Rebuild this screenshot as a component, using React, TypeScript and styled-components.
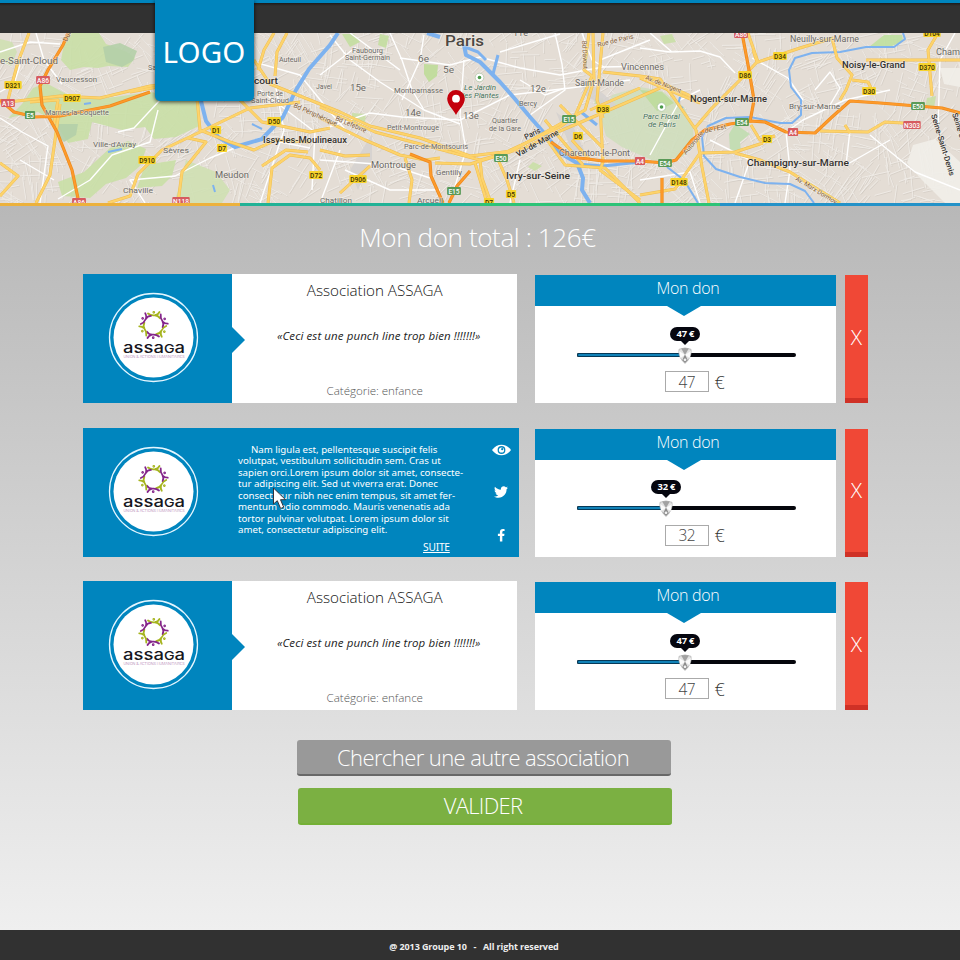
import React from "react";
import styled, { createGlobalStyle } from "styled-components";
import { FaTwitter, FaFacebookF } from "react-icons/fa";

const BLUE = "#0085be";
const LIGHT_FONT = '"Open Sans", "Noto Sans", sans-serif';

const GlobalStyle = createGlobalStyle`
  * { box-sizing: border-box; }
  body { margin: 0; }
  button, input { font: inherit; margin: 0; padding: 0; }
`;

const Page = styled.div`
  width: 960px;
  height: 960px;
  display: flex;
  flex-direction: column;
  overflow: hidden;
  font-family: ${LIGHT_FONT};
  font-weight: 300;
  background: #efefef;
`;

const TopBar = styled.header`
  position: relative;
  flex: none;
  height: 33px;
  background: linear-gradient(#1c1c1c, #313131 3px);
  background-origin: padding-box;
  border-top: 3px solid ${BLUE};
`;

const Logo = styled.div`
  position: absolute;
  z-index: 2;
  top: -3px;
  left: 154.5px;
  width: 99px;
  height: 101px;
  padding: 2px 0 0 0;
  display: flex;
  align-items: center;
  justify-content: center;
  border-radius: 0 0 5px 5px;
  background: ${BLUE};
  box-shadow: 0 1px 4px rgba(0, 0, 0, 0.75);
  color: #fff;
  font: 400 29.5px "Noto Sans", sans-serif;
  letter-spacing: 0.1px;
`;

const MapSvg = styled.svg`
  display: block;
  flex: none;
`;

const Stripe = styled.div`
  flex: none;
  display: grid;
  grid-template-columns: repeat(4, 1fr);
  height: 3px;
`;

const StripePart = styled.span<{ $color: string }>`
  background: ${(p) => p.$color};
`;

const Main = styled.main`
  flex: none;
  height: 724px;
  display: flex;
  flex-direction: column;
  background: linear-gradient(#b8b8b8, #efefef);
`;

const Title = styled.h1`
  margin: 13px 0 0;
  padding-right: 5px;
  height: 55px;
  line-height: 36px;
  text-align: center;
  color: #fff;
  font-size: 26px;
  font-weight: 300;
  letter-spacing: -0.38px;
`;

const List = styled.div`
  display: flex;
  flex-direction: column;
  gap: 24.5px;
  padding-left: 83px;
`;

const Row = styled.section`
  display: flex;
  height: 129px;
`;

const Card = styled.article<{ $open?: boolean }>`
  position: relative;
  display: flex;
  flex: none;
  width: ${(p) => (p.$open ? 435.5 : 433.5)}px;
  margin-right: ${(p) => (p.$open ? 16.5 : 18.5)}px;
  background: ${(p) => (p.$open ? BLUE : "#fff")};
`;

const Badge = styled.div<{ $arrow?: boolean }>`
  position: relative;
  flex: none;
  width: 149px;
  background: ${BLUE};
  padding: 18px 0 0 25px;
  &::after {
    content: "";
    display: ${(p) => (p.$arrow ? "block" : "none")};
    position: absolute;
    left: 100%;
    top: 53px;
    border: 13px solid transparent;
    border-left-color: ${BLUE};
    border-right: 0;
  }
`;

const Summary = styled.div`
  flex: 1;
  display: flex;
  flex-direction: column;
  align-items: center;
  padding: 6px 0 0 1px;
  white-space: nowrap;
`;

const Name = styled.h2`
  margin: 0;
  font-size: 15.2px;
  line-height: 20px;
  font-weight: 300;
  letter-spacing: -0.02px;
  color: #111;
`;

const Quote = styled.p`
  margin: 28px 0 0;
  padding-left: 8px;
  font: italic 400 11.5px/16px "Open Sans", sans-serif;
  letter-spacing: 0.09px;
  color: #222;
`;

const Category = styled.p`
  margin: 38px 0 0;
  font-size: 11.6px;
  line-height: 18px;
  letter-spacing: -0.05px;
  color: #555;
`;

const Details = styled.div`
  width: 238px;
  padding: 16px 0 0 6px;
  color: #fff;
  font: 400 9.7px/11.57px "Noto Sans", sans-serif;
  letter-spacing: -0.02px;
  white-space: nowrap;
`;

const Line = styled.span<{ $indent?: boolean }>`
  display: block;
  padding-left: ${(p) => (p.$indent ? 13 : 0)}px;
`;

const More = styled.a`
  display: block;
  width: 28px;
  margin: 6px 0 0 185px;
  font-size: 10.200px;
  letter-spacing: -0.2px;
  text-decoration: underline;
`;

const Socials = styled.div`
  flex: 1;
  display: flex;
  flex-direction: column;
  align-items: center;
  justify-content: space-between;
  padding: 16px 0 15px 14px;
  color: #fff;
`;

const Pointer = styled.svg`
  position: absolute;
  left: 189px;
  top: 59px;
`;

const Panel = styled.div`
  flex: none;
  width: 301px;
  height: 128px;
  margin: 1px 9px 0 0;
  background: #fff;
`;

const PanelHead = styled.div`
  position: relative;
  height: 31px;
  line-height: 27px;
  padding-left: 5px;
  text-align: center;
  background: ${BLUE};
  color: #fff;
  font-size: 16px;
  letter-spacing: -0.3px;
  &::after {
    content: "";
    position: absolute;
    top: 31px;
    left: 132px;
    border: 17px solid transparent;
    border-top: 10px solid ${BLUE};
    border-bottom: 0;
  }
`;

const Track = styled.div`
  position: relative;
  width: 219px;
  height: 4px;
  margin: 46.5px 0 0 42px;
  border-radius: 2px;
  background: #05060c;
`;

const Fill = styled.div`
  height: 4px;
  border: 1px solid #063a58;
  border-right: 0;
  border-radius: 2px 0 0 2px;
  background: #1182b8;
`;

const Thumb = styled.div`
  position: absolute;
  top: -26px;
  width: 30px;
  margin-left: -15px;
  display: flex;
  flex-direction: column;
  align-items: center;
`;

const Bubble = styled.div`
  position: relative;
  width: 30px;
  height: 14px;
  margin-bottom: 6px;
  border-radius: 7px;
  background: #05060f;
  color: #fff;
  text-align: center;
  font: 700 9.4px/14px "Open Sans", sans-serif;
  letter-spacing: -0.2px;
  &::after {
    content: "";
    position: absolute;
    left: 11px;
    top: 14px;
    border: 4px solid transparent;
    border-top-color: #05060f;
    border-bottom: 0;
  }
`;

const Amount = styled.div`
  display: flex;
  align-items: center;
  gap: 6px;
  margin: 14.5px 0 0 130px;
  color: #333;
  font-size: 18px;
  line-height: 20px;
`;

const AmountInput = styled.input`
  width: 43.5px;
  height: 21px;
  border: 1px solid #aaa;
  border-radius: 0;
  background: #fff;
  text-align: center;
  color: #444;
  font-size: 15.5px;
  font-weight: 300;
  letter-spacing: -0.6px;
  outline: 0;
`;

const Remove = styled.button`
  flex: none;
  width: 23px;
  height: 128px;
  margin-top: 1px;
  border: 0;
  border-bottom: 5px solid #cf3126;
  background: #f04836;
  color: #fff;
  font-size: 21px;
`;

const Actions = styled.div`
  display: flex;
  flex-direction: column;
  gap: 12px;
  padding: 29.5px 0 0 297px;
`;

const Action = styled.button<{ $primary?: boolean }>`
  width: 374px;
  height: 36.5px;
  margin-left: ${(p) => (p.$primary ? 0.5 : 0)}px;
  padding-right: ${(p) => (p.$primary ? 3 : 2)}px;
  border: 0;
  border-bottom: 2px solid ${(p) => (p.$primary ? "#74b035" : "#686868")};
  border-radius: 3px;
  background: ${(p) => (p.$primary ? "#7bb042" : "#999")};
  color: #fff;
  font-size: 22px;
  line-height: 34px;
  letter-spacing: ${(p) => (p.$primary ? -0.7 : -0.58)}px;
`;

const Footer = styled.footer`
  flex: none;
  height: 30px;
  padding: 1px 12px 0 0;
  line-height: 31px;
  text-align: center;
  white-space: pre;
  background: #313131;
  color: #eee;
  font-size: 9px;
  font-weight: 700;
  letter-spacing: -0.1px;
`;

/* ---------- map data ---------- */

const parks: [string, string][] = [
  ["M66 33H99L106 44 127 52 135 58 128 67 108 66 98 68 84 67 70 70 61 60Z", "#c9dfa6"],
  ["M103 47 120 43 137 51 133 61 122 67 106 62Z", "#b4cfa9"],
  ["M0 39 12 42 17 52 11 66 0 60Z", "#cfe0b2"],
  ["M33 88 46 83 70 96 100 99 150 92 200 99 199 126 176 137 154 139 145 127 122 130 92 122 88 139 68 143 55 122 38 112 8 118 22 104Z", "#c9dfa6"],
  ["M54 124 78 124 76 135 64 142 56 134Z", "#b4cfa9"],
  ["M110 148 128 141 146 149 140 166 126 178 106 184 90 198 62 196 58 182 84 172Z", "#c9dfa6"],
  ["M145 165 176 160 172 176 162 186 137 188Z", "#c9dfa6"],
  ["M186 160 216 172 230 190 222 203H174L180 184Z", "#cfe0b2"],
  ["M342 34 354 34 360 42 350 47Z M380 34 389 36 386 48 378 45Z", "#c3dea0"],
  ["M424 64 438 65 437 76 429 82 424 74Z", "#bedc98"],
  ["M352 113 366 114 365 122 352 121Z M533 162 542 166 535 171 528 167Z M594 99 603 98 604 104 595 104Z", "#c9dfa6"],
  ["M612 95 640 87 662 91 684 107 693 126 694 146 682 157 654 161 622 147 606 136 601 118Z", "#cfdebc"],
  ["M640 90 662 92 674 103 657 111Z", "#bedb9b"],
  ["M735 124 750 134 740 142 741 152 730 150 729 134Z", "#c0ddb0"],
  ["M884 35H902L903 41 890 47 869 47Z", "#bfe0a0"],
  ["M660 36 672 34 676 42 664 44Z M927 98 936 96 934 108 925 108Z", "#c9dfa6"],
  ["M940 68H960V87L944 84Z M907 163 913 145 935 139 960 162V203H945L921 179Z", "#f1eee9"],
  ["M580 78 594 86 620 108 610 110 585 95Z M556 112 572 124 584 150 572 152Z M372 134 350 170 358 190 372 160Z", "#d5d1cf"],
];

const whiteRoads = [
  "M36 33 44 60 62 84 M0 52 30 42 60 44 M58 199 90 180 112 155 150 142 158 110M145 203 130 180 175 176 210 158 260 138 310 148",
  "M160 100 134 128 118 132M0 92 14 84 20 65 M0 118 22 132 48 146 40 203M20 160 54 180",
  "M254 62 300 75 330 112 350 135M260 90 315 132 312 190M276 88 284 130 260 203",
  "M320 130 370 113 402 117 460 120 510 95 570 88 630 80M390 33 402 60 412 90 424 110M450 203 466 150 460 115 464 60",
  "M330 35 350 60 380 82 424 110 460 124 M320 75 356 47 M400 58 450 65 480 57 520 68 560 75 603 67 650 66M520 80 545 95 565 88",
  "M350 33 400 70 M424 35 420 60 402 100 M555 33 562 64 565 90 530 115M320 160 390 165 430 178M520 160 510 203",
  "M640 48 670 52 700 51 720 57 735 73M672 52 650 33M752 58 788 78 803 100M700 90 680 100 650 155",
  "M785 203 790 170 786 132 803 120 845 100 890 90M815 90 830 72 840 88 830 105M850 130 846 165 890 140",
  "M870 135 915 172 960 190M710 140 750 160 735 203M955 33 940 60 938 130M640 180 690 172 700 203",
  "M500 52 560 34M582 33 592 60 604 67M600 60 650 40M340 150 320 203M345 170 390 190 440 190",
];

const yellowRoads = [
  "M29 33 18 62 12 84 8 100M0 103 60 96 100 98 150 86 200 80M60 104 55 140 50 175 36 203M0 163 18 176 0 196",
  "M30 102 58 100 54 124M200 84 180 83 130 92M254 60 270 84 340 112 370 126 420 138 470 156 520 150 560 131 600 114 660 88",
  "M108 203 130 196 138 174 162 150 200 132 250 108 300 102M188 138 206 142 182 172 178 203M197 98 200 130 230 142 254 150 276 140 310 142",
  "M232 92 262 122 310 132 330 128M268 203 272 168 290 155 310 158 320 170M274 33 264 50 258 70M287 33 277 52 275 76",
  "M262 166 286 150 308 152M320 107 375 132 450 152 480 160 510 152 585 110 594 80 593 33",
  "M320 118 365 140 400 155 425 160 440 158M320 150 345 156 370 155M435 163 470 164 500 155 560 127 575 116 592 76 584 70 589 33",
  "M480 160 482 178 491 203M496 155 507 180 514 203M475 163 487 203M405 158 412 180 409 203M340 193 370 166",
  "M603 72 640 76 660 79 674 98 696 130 702 167 709 203M600 105 603 162 600 170 640 200M545 120 560 138 583 165M560 105 603 148M603 33 600 66 597 100 603 118",
  "M545 137 565 165 605 168 640 203M590 110 640 88M572 140 590 160M640 77 656 80 695 98",
  "M748 33 758 62 800 48 833 38M695 128 712 108 740 80 757 62 753 50M640 195 675 189 700 153 735 152 763 143",
  "M751 125 760 140 775 136M735 153 760 160 790 172 840 203M832 38 837 58 852 75 846 90 840 100M820 131 868 132 885 122 920 124",
  "M938 33 928 50 932 96M866 60 960 60M852 80 868 82 872 90M845 125 850 133M640 78 700 103",
];

const orangeRoads = [
  "M68 33 63 45 48 70 40 86 42 105 57 132 72 170 79 203M0 100 14 112 35 117 60 116 110 106 150 92",
  "M410 154 430 162 431 176 443 203M470 171 457 186 449 203M551 142 572 157 603 161 640 161",
  "M640 161 665 163 676 160 692 140 705 130 730 124 750 121 765 122 786 132 815 133 832 117 850 101 880 103 942 108 960 113",
  "M742 33 749 70 754 100 750 122M662 178V203",
];

const rivers: [string, number][] = [
  ["M338 33 330 45 309 69 296 90 283 117 262 139 235 147 218 137 206 121 201 101", 4],
  ["M427 33 440 37M464 45 466 55 480 62 500 82 515 99 530 117 545 134 560 153 577 163 583 178 582 190 590 203", 4],
  ["M465 47 478 52 486 60M498 55 493 74M577 164 603 166 640 162M581 112 597 125", 3],
  ["M903 33 905 39 894 47 866 47 840 52 812 53 795 58 789 70 791 87 801 100 801 115 792 123 780 123 750 117 726 118 708 126 702 137 704 156 716 169 740 177 765 183 790 184 805 191 814 203", 2],
  ["M667 167 684 180 698 203M680 97 678 105 683 108M108 152 122 149M213 185 215 192M252 124 262 129M84 104 91 103", 2],
];

type Label = [text: string, x: number, y: number, width: number, size: number, color: string, rotate?: number];
const G = "#6b6964";
const D = "#33312e";
const labels: Label[] = [
  ["e-Saint-Cloud", 0, 64, 58, 9, G],
  ["Vaucresson", 56, 82, 41, 8, G],
  ["Marnes-la-Coquette", 45, 115, 64, 7.5, G],
  ["Ville-d'Avray", 93, 147, 43, 8, G],
  ["Sèvres", 163, 153, 26, 8, G],
  ["Meudon", 215, 178, 34, 9, G],
  ["Chaville", 123, 193, 30, 8, G],
  ["Sa", 148, 70, 8, 7, G],
  ["Auteuil", 279, 62, 22, 7, G],
  ["court", 254, 84, 24, 9.5, D],
  ["Porte de", 257, 96, 26, 6.8, G],
  ["Saint-Cloud", 251, 103, 38, 6.8, G],
  ["Issy-les-Moulineaux", 263, 143, 84, 9.5, D],
  ["Dun", 67, 42, 12, 7, "#805a35", -65],
  ["Faubourg", 352, 53, 31, 7, G],
  ["Saint-Germain", 345, 60, 45, 7, G],
  ["Paris", 445, 45.5, 39, 14.5, "#4b4742"],
  ["11e", 513, 36, 15, 9, G],
  ["6e", 418, 62, 11, 9, G],
  ["5e", 443, 73, 11, 9, G],
  ["15e", 350, 91, 16, 9.5, G],
  ["Javel", 316, 89, 16, 7, G],
  ["Montparnasse", 394, 93, 49, 7.8, G],
  ["14e", 405, 116, 16, 9.5, G],
  ["13e", 463, 119, 16, 9.5, G],
  ["12e", 530, 92, 16, 9.5, G],
  ["Le Jardin", 464, 90, 32, 7.5, "#44725b"],
  ["des Plantes", 460, 98, 39, 7.5, "#44725b"],
  ["Petit-Montrouge", 387, 130, 52, 7, G],
  ["Parc-de-Montsouris", 404, 149, 64, 7, G],
  ["Montrouge", 371, 168, 45, 9, G],
  ["Gentilly", 436, 175, 26, 7.5, G],
  ["Arcueil", 417, 203, 26, 8, G],
  ["Chatillon", 320, 203, 32, 8, G],
  ["Bercy", 519, 106, 18, 7, G],
  ["Quartier", 492, 123, 26, 7, G],
  ["de la Gare", 489, 131, 32, 7, G],
  ["Saint-Mande", 575, 86, 49, 8.5, G],
  ["Vincennes", 621, 70, 43, 8.5, G],
  ["Charenton-le-Pont", 559, 156, 71, 8.5, G],
  ["Ivry-sur-Seine", 506, 179, 64, 9.5, D],
  ["Paris", 526, 140, 17, 8, D, -27],
  ["Val-de-Marne", 518, 157, 47, 8, D, -29],
  ["Bd Lefebvre", 335, 120, 33, 7, "#805a35", 23],
  ["Bd Périphérique", 293, 107, 47, 7, "#805a35", 24],
  ["Rue de Paris", 598, 47, 37, 6.5, "#805a35", -14],
  ["Bd Davout", 582, 41, 28, 6.5, "#805a35", 87],
  ["Av. de Nogent", 645, 79, 38, 6.5, "#805a35", 22],
  ["Autoroute", 686, 155, 28, 6.5, "#805a35", -50],
  ["de l'Est", 705, 133, 22, 6.5, "#805a35", -12],
  ["Parc Floral", 643, 119, 37, 7.5, "#44725b"],
  ["de Paris", 648, 127, 28, 7.5, "#44725b"],
  ["Nogent-sur-Marne", 690, 102, 77, 9.5, D],
  ["Neuilly-sur-Marne", 790, 42, 69, 8.2, G],
  ["Noisy-le-Grand", 842, 68, 63, 9.3, D],
  ["Cham", 936, 55, 24, 9, G],
  ["Bry-sur-Marne", 789, 109, 51, 7.5, G],
  ["Champigny-sur-Marne", 747, 166, 102, 9.7, D],
  ["Av. Marx Dormoy", 795, 180, 47, 6.5, "#805a35", 31],
  ["Seine-Saint-Denis", 931, 115, 64, 7.8, D, 73],
  ["Seine-et-Marne", 952, 114, 52, 7.8, D, 72],
];

type Shield = [text: string, x: number, y: number, kind: "d" | "a" | "e"];
const shields: Shield[] = [
  ["D321", 13, 85, "d"], ["A86", 43, 80, "a"], ["A13", 8, 103, "a"], ["E5", 30, 115, "e"],
  ["D907", 72, 98, "d"], ["D910", 147, 160, "d"], ["D1", 216, 130, "d"], ["D7", 222, 148, "d"],
  ["D50", 274, 121, "d"], ["D72", 316, 175, "d"], ["A86", 79, 202, "a"], ["N118", 181, 201, "a"],
  ["D906", 358, 179, "d"], ["E15", 454, 191, "e"], ["E50", 501, 158, "e"], ["D5", 511, 194, "d"],
  ["D7", 489, 202, "d"], ["E15", 569, 119, "e"], ["D38", 603, 109, "d"], ["D6", 578, 136, "d"],
  ["A4", 640, 161, "a"], ["E54", 665, 163, "e"], ["D148", 679, 182, "d"], ["D34", 780, 56, "d"],
  ["D86", 745, 75, "d"], ["A86", 741, 34, "a"], ["E54", 742, 122, "e"], ["D3", 767, 139, "d"],
  ["A4", 793, 132, "a"], ["D30", 869, 91, "d"], ["D370", 927, 67, "d"], ["D104", 932, 33, "d"],
  ["E50", 918, 106, "e"], ["N303", 912, 125, "a"],
];
const shieldFill = { d: "#f7d32c", a: "#d65b60", e: "#599a57" };

/* Fine street mesh, generated from a seeded sequence so that it never changes. */
function buildMesh(): string {
  let seed = 7;
  const rnd = () => {
    seed = (seed * 16807) % 2147483647;
    return seed / 2147483647;
  };
  let d = "";
  for (let i = 0; i < 1700; i++) {
    const x = rnd() * 970 - 5;
    const y = 30 + rnd() * 175;
    const zone = Math.floor(x / 80) * 0.7 + Math.floor(y / 50) * 0.5;
    const a = zone + (rnd() > 0.5 ? Math.PI / 2 : 0) + (rnd() - 0.5) * 0.3;
    const l = 8 + rnd() * 22;
    d += `M${x.toFixed(1)} ${y.toFixed(1)}l${(Math.cos(a) * l).toFixed(1)} ${(Math.sin(a) * l).toFixed(1)}`;
  }
  return d;
}
const mesh = buildMesh();

function CityMap() {
  return (
    <MapSvg width="960" height="170" viewBox="0 33 960 170" fontFamily="Roboto, sans-serif">
      <rect y="33" width="960" height="170" fill="#e4ddd5" />
      <path d={mesh} stroke="#cac3bb" strokeWidth=".6" opacity=".75" transform="translate(.8 .8)" />
      <path d={mesh} stroke="#f3efeb" strokeWidth=".9" opacity=".85" />
      {parks.map(([d, fill]) => <path key={d} d={d} fill={fill} opacity=".9" />)}
      <g fill="none" strokeLinejoin="round">
        {whiteRoads.map((d) => <path key={d} d={d} stroke="#fff" strokeWidth="1.4" />)}
        {rivers.map(([d, w]) => <path key={d} d={d} stroke="#7db2ef" strokeWidth={w} />)}
        {yellowRoads.map((d) => <path key={d} d={d} stroke="#eebc50" strokeWidth="3" />)}
        {yellowRoads.map((d) => <path key={d} d={d} stroke="#fdd36b" strokeWidth="2.2" />)}
        {orangeRoads.map((d) => <path key={d} d={d} stroke="#ee8a1c" strokeWidth="3.2" />)}
        {orangeRoads.map((d) => <path key={d} d={d} stroke="#fd9a2b" strokeWidth="1.8" />)}
      </g>
      {labels.map(([t, x, y, w, size, color, rot = 0]) => (
        <text
          key={t + x}
          x={x}
          y={y}
          fontSize={size}
          fill={color}
          stroke="#f5f1ec"
          strokeWidth="1.2"
          strokeOpacity=".6"
          paintOrder="stroke"
          fontWeight={color === D || size > 12 ? 500 : 400}
          fontStyle={color === "#44725b" ? "italic" : "normal"}
          textLength={w}
          lengthAdjust="spacingAndGlyphs"
          transform={`rotate(${rot} ${x} ${y})`}
        >
          {t}
        </text>
      ))}
      {shields.map(([t, x, y, kind]) => {
        const w = t.length * 3.6 + 3;
        return (
          <g key={t + x}>
            <rect x={x - w / 2} y={y - 4} width={w} height="8" rx="1" fill={shieldFill[kind]} />
            <text x={x} y={y + 2.5} textAnchor="middle" fontSize="6.6" fontWeight="500" fill={kind === "d" ? "#3c3000" : "#fff"}>
              {t}
            </text>
          </g>
        );
      })}
      {[[479.5, 77.5], [661.5, 107]].map(([x, y]) => (
        <g key={x}>
          <circle cx={x} cy={y} r="4.3" fill="#fff" stroke="#a9c3a0" strokeWidth=".7" />
          <circle cx={x} cy={y} r="1.8" fill="#4b9a4b" />
        </g>
      ))}
      <path d="M456 115C453 109 447.2 105 447.2 98.500A8.800 8.500 0 0 1 464.800 98.500C464.800 105 459 109 456 115Z" fill="#c4000c" />
      <circle cx="456" cy="98.7" r="3.9" fill="#fff" />
    </MapSvg>
  );
}

function AssagaLogo() {
  return (
    <svg width="91" height="91" viewBox="0 0 91 91">
      <circle cx="45.5" cy="45.5" r="44" fill="none" stroke="#e4f6ff" strokeWidth="1.3" />
      <circle cx="45.5" cy="45.5" r="40" fill="#fff" />
      {[0, 60, 120, 180, 240, 300].map((a, i) => (
        <g key={a} transform={`translate(45.5 33) rotate(${a})`} fill="none" stroke={i % 2 ? "#84258a" : "#a6b41f"} strokeLinecap="round">
          <path d="M-5.500 -11.500Q-2.500 -9.200 1 -9.700Q4.500 -9.800 6.500 -6.800M2 -9.800Q4.800 -10.600 6 -13" strokeWidth="1.8" />
          <circle cx=".3" cy="-12.7" r=".8" strokeWidth="1.1" />
        </g>
      ))}
      <text x="15" y="61" fontFamily="Inter, sans-serif" fontSize="15" fontWeight="500" fill="#16161c" textLength="62" lengthAdjust="spacingAndGlyphs">
        assa<tspan fontSize="11.5">G</tspan>a
      </text>
      <text x="15.5" y="66.3" fontFamily="Roboto, sans-serif" fontSize="3.4" fill="#a56aa5" textLength="61" lengthAdjust="spacingAndGlyphs">
        UNION &amp; ACTIONS HUMANITAIRES
      </text>
    </svg>
  );
}

function Knob() {
  return (
    <svg width="14" height="17" viewBox="0 0 14 17">
      <path d="M1 2.300Q7 -.5 13 2.300Q14.300 10 7 16.500Q-.3 10 1 2.300Z" fill="#e3e3e3" stroke="#b0b0b0" strokeWidth=".7" />
      <path d="M3.200 1.600Q7 .4 10.800 1.600L7 8Z" fill="#a2a2a2" />
      <path d="M1.200 4 7 8 2.300 11ZM12.800 4 7 8 11.700 11Z" fill="#fbfbfb" />
      <path d="M7 7.500 9.800 13.300 7 16 4.200 13.300Z" fill="#8a8a8a" />
      <circle cx="7" cy="12.8" r="1.4" fill="#f4f4f4" />
    </svg>
  );
}

function DonationPanel({ value, position }: { value: number; position: number }) {
  return (
    <Panel>
      <PanelHead>Mon don</PanelHead>
      <Track>
        <Fill style={{ width: `${position}%` }} />
        <Thumb style={{ left: `${position}%` }}>
          <Bubble>{value} €</Bubble>
          <Knob />
        </Thumb>
      </Track>
      <Amount>
        <AmountInput value={value} readOnly />
        <span>€</span>
      </Amount>
    </Panel>
  );
}

function SummaryCard() {
  return (
    <Card>
      <Badge $arrow><AssagaLogo /></Badge>
      <Summary>
        <Name>Association ASSAGA</Name>
        <Quote>«Ceci est une punch line trop bien !!!!!!!»</Quote>
        <Category>Catégorie: enfance</Category>
      </Summary>
    </Card>
  );
}

const description = [
  "Nam ligula est, pellentesque suscipit felis",
  "volutpat, vestibulum sollicitudin sem. Cras ut",
  "sapien orci.Lorem ipsum dolor sit amet, consecte-",
  "tur adipiscing elit. Sed ut viverra erat. Donec",
  "consectetur nibh nec enim tempus, sit amet fer-",
  "mentum odio commodo. Mauris venenatis ada",
  "tortor pulvinar volutpat. Lorem ipsum dolor sit",
  "amet, consectetur adipiscing elit.",
];

function DetailCard() {
  return (
    <Card $open>
      <Badge><AssagaLogo /></Badge>
      <Details>
        {description.map((line, i) => <Line key={line} $indent={i === 0}>{line}</Line>)}
        <More>SUITE</More>
      </Details>
      <Socials>
        <svg width="19" height="12" viewBox="0 0 19 12">
          <path d="M0 6Q4 .7 9.500 .7T19 6Q15 11.300 9.500 11.300T0 6Z" fill="#fff" />
          <circle cx="9.5" cy="6" r="3.9" fill={BLUE} />
          <circle cx="9.5" cy="6" r="2.6" fill="#fff" />
          <circle cx="10.2" cy="5.2" r="1.1" fill={BLUE} />
        </svg>
        <FaTwitter size={14} />
        <FaFacebookF size={12.5} />
      </Socials>
      <Pointer width="16" height="24" viewBox="0 0 16 24">
        <path d="M1.500 1V17L5.300 13.700 8.600 21.500 11.700 20.200 8.500 12.700H13.500Z" fill="#fff" stroke="#33333b" strokeWidth="1" strokeLinejoin="round" />
      </Pointer>
    </Card>
  );
}

export default function App() {
  return (
    <Page>
      <GlobalStyle />
      <TopBar><Logo>LOGO</Logo></TopBar>
      <CityMap />
      <Stripe>
        <StripePart $color="#ecb13c" />
        <StripePart $color="#21b296" />
        <StripePart $color="#2dc377" />
        <StripePart $color="#2492c8" />
      </Stripe>
      <Main>
        <Title>Mon don total : 126€</Title>
        <List>
          <Row><SummaryCard /><DonationPanel value={47} position={49.5} /><Remove>X</Remove></Row>
          <Row><DetailCard /><DonationPanel value={32} position={40.8} /><Remove>X</Remove></Row>
          <Row><SummaryCard /><DonationPanel value={47} position={49.5} /><Remove>X</Remove></Row>
        </List>
        <Actions>
          <Action>Chercher une autre association</Action>
          <Action $primary>VALIDER</Action>
        </Actions>
      </Main>
      <Footer>{"@ 2013 Groupe 10   -   All right reserved"}</Footer>
    </Page>
  );
}
